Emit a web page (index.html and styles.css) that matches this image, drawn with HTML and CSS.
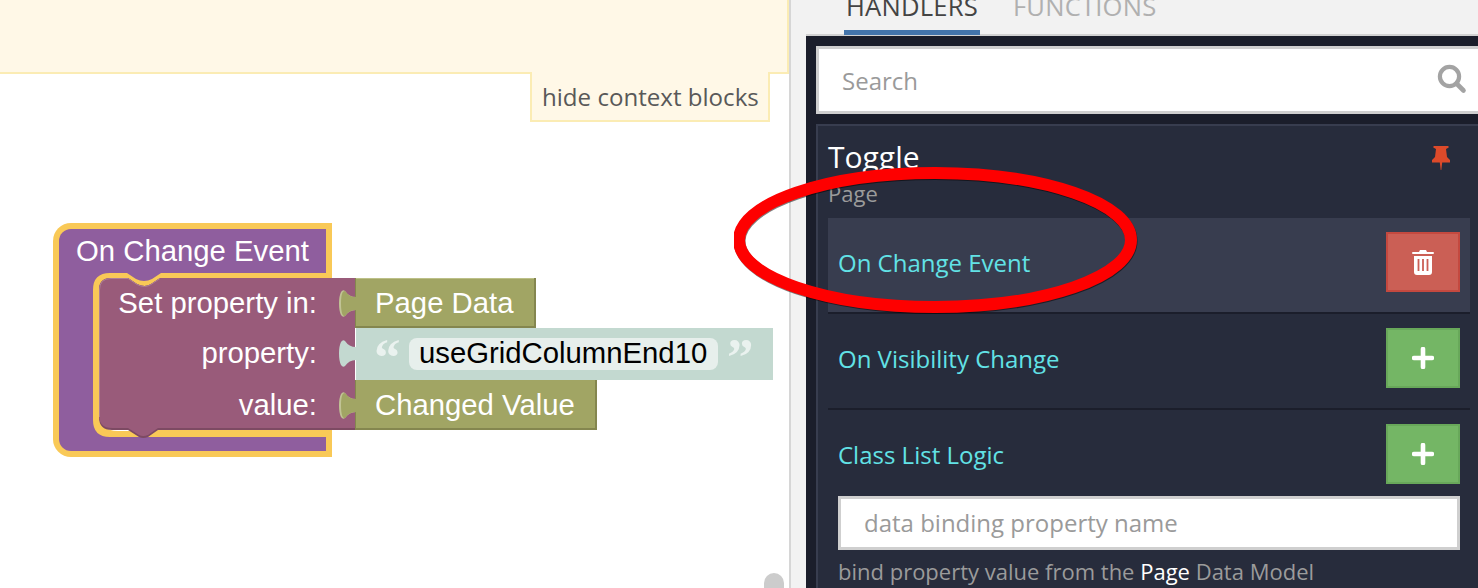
FILE: index.html
```html
<!DOCTYPE html>
<html lang="en">
<head>
<meta charset="utf-8">
<title>Toggle handlers</title>
<link rel="stylesheet" href="styles.css">
</head>
<body>
<div class="page">
  <main class="canvas">
    <div class="context-bar"></div>
    <div class="context-tab">hide context blocks</div>
    <svg class="blocks" width="788" height="588" viewBox="0 0 788 588">
      <path class="b-yellow" d="M332 223H71a18 18 0 0 0-18 18V439a18 18 0 0 0 18 18H332Z"/>
      <path class="b-purple" d="M326 229H71a12 12 0 0 0-12 12V439a12 12 0 0 0 12 12H326Z"/>
      <path class="b-yellow" d="M93 290q0-17 17-17H127l9 6q8 4 16 0l9-6H332V437H110q-17 0-17-17Z"/>
      <path class="b-white" d="M99 412q0 19 19 19h12v-12H99Z"/>
      <path class="b-shade" d="M99 290q0-12 12-12H128l9 6q8 4 14 0l9-6H355V430H158l-10 7q-5 2-9 0l-11-7H112q-13 0-13-13Z"/>
      <path class="b-stmt" d="M99 290q0-12 12-12H128l9 6q8 4 14 0l9-6H355V428H158l-10 7q-5 2-9 0l-11-7H112q-13 0-13-13Z"/>
      <path class="b-stmt-edge" d="M99.500 417V290q0-11.500 11.500-11.500H128l9 6q8 4 14 0l9-6"/>

      <rect class="b-olive-dark" x="355" y="278" width="181" height="50"/>
      <rect class="b-olive" x="356" y="278" width="178" height="48"/>
      <rect class="b-olive-top" x="356" y="278" width="178" height="1"/>
      <path class="b-tab-edge" d="M356 297Q349 297 345 291Q343 289 341 292Q339 296 339 303.500Q339 311 341 315Q343 318 345 316Q349 310 356 310Z"/>
      <path class="b-olive" d="M356 297Q349 297 345.500 291.500Q344 290 342.500 292.500Q341 296 341 303.500Q341 311 342.500 314.500Q344 317 345.500 315.500Q349 310 356 310Z"/>

      <rect class="b-text" x="356" y="328" width="417" height="52"/>
      <path class="b-text" d="M356 347Q349 347 345 341Q343 339 341 342Q339 346 339 353.500Q339 361 341 365Q343 368 345 366Q349 360 356 360Z"/>
      <text class="b-quote" x="374" y="375">“</text>
      <rect class="b-field" x="409" y="338" width="309" height="32" rx="8"/>
      <text class="b-string" x="419" y="363">useGridColumnEnd10</text>
      <text class="b-quote" x="727" y="375">”</text>

      <rect class="b-olive-dark" x="355" y="380" width="242" height="50"/>
      <rect class="b-olive" x="356" y="380" width="239" height="48"/>
      <path class="b-tab-edge" d="M356 399Q349 399 345 393Q343 391 341 394Q339 398 339 405.500Q339 413 341 417Q343 420 345 418Q349 412 356 412Z"/>
      <path class="b-olive" d="M356 399Q349 399 345.500 393.500Q344 392 342.500 394.500Q341 398 341 405.500Q341 413 342.500 416.500Q344 419 345.500 417.500Q349 412 356 412Z"/>

      <text class="b-label" x="76" y="261">On Change Event</text>
      <text class="b-label b-end" x="317" y="313">Set property in:</text>
      <text class="b-label b-end" x="317" y="363">property:</text>
      <text class="b-label b-end" x="317" y="415">value:</text>
      <text class="b-label" x="375" y="313">Page Data</text>
      <text class="b-label" x="375" y="415">Changed Value</text>
    </svg>
    <div class="scroll-thumb"></div>
  </main>

  <aside class="side">
    <nav class="tabs">
      <span class="tab tab-active">HANDLERS</span>
      <span class="tab">FUNCTIONS</span>
    </nav>
    <section class="panel">
      <div class="search">
        <span class="search-text">Search</span>
        <svg class="search-icon" width="30" height="30" viewBox="0 0 30 30">
          <circle cx="12.500" cy="12.500" r="9.600" fill="none" stroke="#a3a3a3" stroke-width="4.200"/>
          <path d="M19.500 19.500l7 7" fill="none" stroke="#a3a3a3" stroke-width="4.600" stroke-linecap="round"/>
        </svg>
      </div>
      <div class="card">
        <div class="card-head">
          <h2 class="card-title">Toggle</h2>
          <svg class="pin" width="20" height="26" viewBox="0 0 20 26">
            <path d="M3.500 1h13a1 1 0 0 1 .8 1.800L15 4l1 8 3 3v2.500H11.200L10.300 25h-.6L8.800 17.500H1V15l3-3 1-8L2.700 2.800A1 1 0 0 1 3.500 1Z" fill="#dd4a2a"/>
          </svg>
        </div>
        <div class="card-sub">Page</div>

        <div class="handler handler-on">
          <div class="handler-head">
            <span class="handler-name">On Change Event</span>
            <button class="btn btn-del" type="button">
              <svg width="22" height="25" viewBox="0 0 22 25">
                <path d="M8 0h6l1 2h6q1 0 1 1t-1 1H1Q0 4 0 3t1-1h6ZM2 6h18v16q0 3-3 3H5q-3 0-3-3Z" fill="#fff"/>
                <path d="M6.500 9v12M11 9v12M15.500 9v12" stroke="#cb5f55" stroke-width="1.800"/>
              </svg>
            </button>
          </div>
        </div>

        <div class="handler">
          <div class="handler-head">
            <span class="handler-name">On Visibility Change</span>
            <button class="btn btn-add" type="button">
              <svg width="22" height="22" viewBox="0 0 22 22"><path d="M2 11h18M11 2v18" stroke="#fff" stroke-width="4.600" stroke-linecap="round"/></svg>
            </button>
          </div>
        </div>

        <div class="handler handler-last">
          <div class="handler-head">
            <span class="handler-name">Class List Logic</span>
            <button class="btn btn-add" type="button">
              <svg width="22" height="22" viewBox="0 0 22 22"><path d="M2 11h18M11 2v18" stroke="#fff" stroke-width="4.600" stroke-linecap="round"/></svg>
            </button>
          </div>
          <div class="binding">data binding property name</div>
          <p class="help">bind property value from the <b class="help-em">Page</b> Data Model</p>
        </div>
      </div>
    </section>
  </aside>

  <svg class="annotation" width="420" height="160" viewBox="0 0 420 160">
    <ellipse class="ring-shadow" cx="201.500" cy="75" rx="196" ry="67"/>
    <ellipse class="ring" cx="201" cy="74" rx="196" ry="67"/>
  </svg>
</div>
</body>
</html>
```
FILE: styles.css
```css
* { box-sizing: border-box; }
html, body { margin: 0; padding: 0; }
body { font-family: "Open Sans", sans-serif; background: #fff; overflow: hidden; }

.page { position: relative; display: flex; width: 1478px; height: 588px; overflow: hidden; }

/* Canvas */
.canvas { position: relative; flex: 0 0 791px; height: 588px; background: #fff; border-right: 2px solid #d6d6d6; }
.context-bar { height: 74px; background: #fff8e7; border-bottom: 2px solid #fbecb4; border-right: 2px solid #fbecb4; }
.context-tab {
  position: absolute; top: 72px; left: 530px; width: 240px; height: 50px;
  padding: 10px 0 0 10px; font-size: 24.100px; line-height: 30px; color: #595959; white-space: nowrap;
  background: #fff8e7; border: 2px solid #fbecb4; border-top: 0;
}
.blocks { position: absolute; top: 0; left: 0; }
.blocks text { font-family: "Liberation Sans", Arial, sans-serif; }
.b-yellow { fill: #f9c957; }
.b-purple { fill: #8f5e9e; }
.b-white { fill: #fff; }
.b-shade { fill: #7d4a63; }
.b-stmt { fill: #995b7a; }
.b-stmt-edge { fill: none; stroke: #ad7f96; stroke-width: 1px; }
.b-olive { fill: #a1a564; }
.b-olive-dark { fill: #84864f; }
.b-olive-top { fill: #bcc088; }
.b-tab-edge { fill: #c1c395; }
.b-text { fill: #c3d9d0; }
.b-field { fill: #e7efec; }
.b-label { font-size: 29.300px; fill: #fff; }
.b-end { text-anchor: end; }
.b-string { font-size: 29.300px; fill: #000; }
.blocks .b-quote { font-family: "Liberation Serif", serif; font-size: 53px; font-weight: 700; fill: #fff; fill-opacity: 0.65; }
.scroll-thumb { position: absolute; left: 764px; top: 573px; width: 20px; height: 15px; background: #cccccc; border-radius: 10px 10px 0 0; }

/* Side panel */
.side { flex: 1; min-width: 0; height: 588px; background: #f2f2f2; padding-left: 15px; display: flex; flex-direction: column; }
.tabs { position: relative; z-index: 1; flex: 0 0 35px; display: flex; gap: 31px; padding-left: 38px; align-items: flex-end; overflow: hidden; }
.tab { flex: none; height: 50px; padding: 5px 2px 0; font-size: 25.600px; line-height: 33px; color: #b0b0b0; letter-spacing: 0.2px; border-bottom: 5px solid transparent; white-space: nowrap; }
.tab-active { color: #444; border-bottom-color: #4475ab; }
.panel { flex: 1; min-height: 0; margin-top: -1px; background: #1b1e2b; border-top: 2px solid #d2d2d2; padding: 10px 0 0 10px; }

.search {
  display: flex; align-items: center; justify-content: space-between; height: 68px; padding: 0 11px 0 23px;
  background: #fff; border: 3px solid #cfcfcf; border-right: 0; font-size: 24px; color: #9a9a9a;
}
.search-text { line-height: 30px; padding-top: 2px; }
.search-icon { flex: none; margin-top: -3px; }

.card { margin-top: 10px; height: 600px; background: #272c3c; border-top: 2px solid #383d4f; border-left: 2px solid #383d4f; padding: 0 8px 0 10px; }
.card-head { display: flex; justify-content: space-between; align-items: flex-start; height: 50px; padding: 12px 19px 0 0; }
.card-title { margin: 0; font-size: 30px; font-weight: 400; line-height: 38px; color: #fff; }
.pin { margin-top: 7px; }
.card-sub { font-size: 22px; line-height: 28px; color: #9b9b9b; height: 39px; margin-top: 3px; }

.handler { padding: 14px 10px 20px; border-bottom: 2px solid #1b1e2b; }
.handler-on { background: #383d4f; }
.handler-last { border-bottom: 0; }
.handler-head { display: flex; align-items: center; justify-content: space-between; height: 60px; }
.handler-name { font-size: 24px; line-height: 30px; color: #62e2e6; padding-top: 2px; }
.btn { display: flex; align-items: center; justify-content: center; width: 74px; height: 60px; padding: 0; border-width: 2px; border-style: solid; }
.btn-del { background: #cb5f55; border-color: #c4493f; }
.btn-add { background: #74b665; border-color: #68a85a; }
.binding { margin-top: 12px; height: 54px; padding: 0 23px; background: #fff; border: 3px solid #cfcfcf; font-size: 24px; line-height: 48px; color: #9a9a9a; }
.help { margin: 6px 0 0; font-size: 22px; line-height: 30px; color: #9b9b9b; white-space: nowrap; }
.help-em { font-weight: 400; color: #fff; }

/* Hand-drawn annotation over the page */
.annotation { position: absolute; left: 734px; top: 166px; }
.ring, .ring-shadow { fill: none; stroke-width: 12px; }
.ring { stroke: #fe0000; }
.ring-shadow { stroke: rgba(0, 0, 0, 0.5); }
```
